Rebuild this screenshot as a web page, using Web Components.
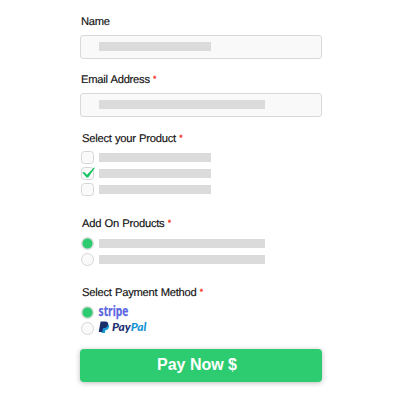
<!DOCTYPE html>
<html lang="en">
<head>
<meta charset="utf-8">
<title>Payment form</title>
<style>
html,body{margin:0;width:400px;height:400px;overflow:hidden;background:#fff}
body{font-family:"Liberation Sans",Arial,sans-serif}
</style>
</head>
<body>
<pay-form></pay-form>
<script>
const define = (name, html) => customElements.define(name, class extends HTMLElement {
  constructor() {
    super();
    this.attachShadow({mode: 'open'}).innerHTML = html;
  }
});

define('field-label', `
<style>
:host{display:flex;height:14px;line-height:16px;font-size:11.2px;color:#111;-webkit-text-stroke:.15px #111;white-space:pre;gap:3.5px;letter-spacing:-.25px;word-spacing:.5px;text-rendering:geometricPrecision}
i{display:none;font:700 7.5px/13px "Liberation Sans",Arial,sans-serif;color:#f9301e;-webkit-text-stroke:.2px #f9301e;letter-spacing:0}
:host([required]) i{display:block}
</style><span><slot></slot></span><i>*</i>`);

define('place-bar', `
<style>
:host{display:block;height:9px;width:112px;background:#dbdbdb}
:host([long]){width:166px}
</style>`);

define('text-field', `
<style>
:host{display:flex;box-sizing:border-box;width:242px;height:24px;padding:6px 0 0 18px;border:1px solid #d9d9d9;border-radius:3px;background:#f9f9f9}
</style><slot></slot>`);

define('choice-row', `
<style>
:host{display:flex;height:16px;align-items:center;gap:5px;margin-left:1px}
.mark{box-sizing:border-box;width:13px;height:13px;border:1px solid #d6d6d6;background:#fafafa;border-radius:3.5px;flex:none;display:flex}
:host([kind=radio]) .mark{border-radius:50%}
:host([kind=radio][checked]) .mark{background:radial-gradient(circle,#2ecc71 4.6px,#d6dbd8 5.4px) border-box;border-color:transparent}
svg{display:none;overflow:visible;flex:none;width:13px;height:11px}
:host([kind=check][checked]) svg{display:block}
</style>
<span class="mark"><svg viewBox="0 0 13 11"><path d="M.3 4.6 2.1 4 5 6.8 11.4.1 13.2-.4 6.2 9.4 4.5 9.5Z" fill="#17c463"/></svg></span><slot></slot>`);

define('stripe-logo', `
<style>:host{display:block;width:30px;height:16px}svg{display:block;overflow:visible}</style>
<svg width="30" height="16"><text x="-.4" y="11.8" font-family="Open Sans,Liberation Sans,sans-serif" font-size="13.4" font-weight="700" fill="#5c66df" stroke="#5c66df" stroke-width=".25" textLength="29.6" lengthAdjust="spacingAndGlyphs">stripe</text></svg>`);

define('paypal-logo', `
<style>:host{display:block;width:48px;height:16px}svg{display:block;overflow:visible}</style>
<svg width="48" height="16">
<path d="M3.2 4H8.7C10.2 4.6 10.3 6 9.8 7.6 9.1 10 7.4 10.2 6.4 10.2L5.9 13H2.6Z" fill="#169bd7"/>
<path d="M1.6 1.4H6.2C8.8 1.4 9.6 2.9 9 5 8.3 7.5 6.6 8.2 4 8.2L3.2 12H-.3Z" fill="#1d2c6b"/>
<text x="13" y="11.4" font-family="Lato,Liberation Sans,sans-serif" font-size="11.2" font-weight="900" font-style="italic" textLength="34.5" lengthAdjust="spacingAndGlyphs"><tspan fill="#202f72">Pay</tspan><tspan fill="#1594d4">Pal</tspan></text>
</svg>`);

define('pay-button', `
<style>
:host{display:block;width:242px;height:33px}
button{display:block;width:100%;height:33px;margin:0;padding:0 8px 1px 0;border:0;border-radius:4px;background:#2ecc71;color:#fff;font:700 16px/32px "Liberation Sans",Arial,sans-serif;letter-spacing:0;box-shadow:0 1px 5px rgba(40,20,40,.3)}
</style><button type="button"><slot></slot></button>`);

define('pay-form', `
<style>
:host{display:flex;flex-direction:column;width:242px;padding:14px 0 0 80px}
field-label{margin-left:1px}
.in{margin-left:2px}
text-field{margin-top:7px}
.email{margin-top:13px}
section{display:flex;flex-direction:column}
.rows{display:flex;flex-direction:column;margin-top:5px}
</style>
<field-label>Name</field-label>
<text-field><place-bar></place-bar></text-field>
<field-label class="email" required>Email Address</field-label>
<text-field><place-bar long></place-bar></text-field>
<section style="margin-top:14px">
 <field-label class="in" required>Select your Product</field-label>
 <div class="rows" style="margin-top:4px">
  <choice-row kind="check"><place-bar></place-bar></choice-row>
  <choice-row kind="check" checked><place-bar></place-bar></choice-row>
  <choice-row kind="check"><place-bar></place-bar></choice-row>
 </div>
</section>
<section style="margin-top:19px">
 <field-label class="in" required>Add On Products</field-label>
 <div class="rows">
  <choice-row kind="radio" checked><place-bar long></place-bar></choice-row>
  <choice-row kind="radio"><place-bar long></place-bar></choice-row>
 </div>
</section>
<section style="margin-top:18px">
 <field-label class="in" required>Select Payment Method</field-label>
 <div class="rows">
  <choice-row kind="radio" checked><stripe-logo></stripe-logo></choice-row>
  <choice-row kind="radio"><paypal-logo></paypal-logo></choice-row>
 </div>
</section>
<pay-button style="margin-top:13px">Pay Now $</pay-button>`);
</script>
</body>
</html>
